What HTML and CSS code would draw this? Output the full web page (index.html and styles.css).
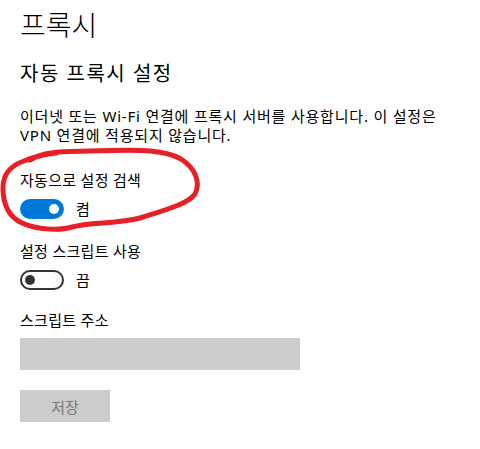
FILE: index.html
```html
<!DOCTYPE html>
<html lang="ko">
<head>
    <meta charset="UTF-8">
    <meta name="viewport" content="width=device-width, initial-scale=1.0">
    <title>프록시</title>
    <link rel="stylesheet" href="styles.css">
</head>
<body>
    <div id="page">
        <h1 class="page-title">프록시</h1>
        <h2 class="section-title">자동 프록시 설정</h2>
        <p class="desc">이더넷 또는 Wi-Fi 연결에 프록시 서버를 사용합니다. 이 설정은<br>VPN 연결에 적용되지 않습니다.</p>

        <div class="setting first">
            <div class="setting-label">자동으로 설정 검색</div>
            <div class="toggle-row">
                <span class="toggle on"><span class="knob"></span></span>
                <span class="toggle-text">켬</span>
            </div>
        </div>

        <div class="setting">
            <div class="setting-label">설정 스크립트 사용</div>
            <div class="toggle-row">
                <span class="toggle off"><span class="knob"></span></span>
                <span class="toggle-text">끔</span>
            </div>
        </div>

        <div class="field">
            <div class="setting-label">스크립트 주소</div>
            <div class="text-box"></div>
        </div>

        <button class="save-btn" disabled>저장</button>

        <!-- hand-drawn red circle over the first setting -->
        <svg class="scribble" width="480" height="449" viewBox="0 0 480 449">
            <path d="M 30 160 C 40 154, 50 152, 70 151.5 L 110 150.5 C 140 149.5, 165 150, 181 159 C 195 168, 201 182, 195 194 C 188 204, 165 210, 140 218 C 118 224, 90 222, 72 227 C 62 230, 40 231, 22 223 C 7 216, 3 202, 3 188 C 3 175, 9 166, 24 161 C 34 157, 45 154, 56 153"
                  fill="none" stroke="#e81f27" stroke-width="5" stroke-linecap="round" stroke-linejoin="round"/>
        </svg>
    </div>
</body>
</html>
```

FILE: styles.css
```css
body {
    margin: 0;
    padding: 0;
    background: #fff;
    color: #000;
    font-family: "Noto Sans", "Noto Sans CJK KR", sans-serif;
}

#page {
    position: relative;
    width: 480px;
    height: 449px;
    overflow: hidden;
    padding-left: 20px;
    box-sizing: border-box;
}

.page-title {
    margin: 5px 0 0 0;
    font-size: 28px;
    font-weight: 300;
    line-height: 40px;
}

.section-title {
    margin: 15px 0 0 0;
    font-size: 20px;
    font-weight: 400;
    line-height: 28px;
    letter-spacing: 1.5px;
}

.desc {
    margin: 19px 0 0 0;
    font-size: 15px;
    line-height: 19px;
    letter-spacing: 0.8px;
    white-space: nowrap;
}

.setting-label {
    font-size: 15px;
    line-height: 20px;
    letter-spacing: 0.3px;
}

.setting {
    margin-top: 22px;
}
.setting.first {
    margin-top: 25px;
}

.toggle-row {
    display: flex;
    align-items: center;
    gap: 12px;
    margin-top: 9px;
    height: 20px;
}

.toggle {
    width: 44px;
    height: 20px;
    border-radius: 10px;
    box-sizing: border-box;
    display: flex;
    align-items: center;
    padding: 0 5px;
}

.toggle .knob {
    width: 10px;
    height: 10px;
    border-radius: 50%;
}

.toggle.on {
    background: #0078d7;
    justify-content: flex-end;
}
.toggle.on .knob {
    background: #fff;
}

.toggle.off {
    border: 2px solid #333;
    padding: 0 3px;
}
.toggle.off .knob {
    background: #333;
}

.toggle-text {
    font-size: 15px;
    line-height: 20px;
}

.field {
    margin-top: 20px;
}

.text-box {
    margin-top: 8px;
    width: 280px;
    height: 32px;
    background: #ccc;
}

.save-btn {
    display: block;
    margin-top: 20px;
    width: 90px;
    height: 32px;
    border: none;
    padding: 0;
    background: #ccc;
    color: #7a7a7a;
    font-family: inherit;
    font-size: 15px;
}

.scribble {
    position: absolute;
    top: 0;
    left: 0;
    pointer-events: none;
}
```
